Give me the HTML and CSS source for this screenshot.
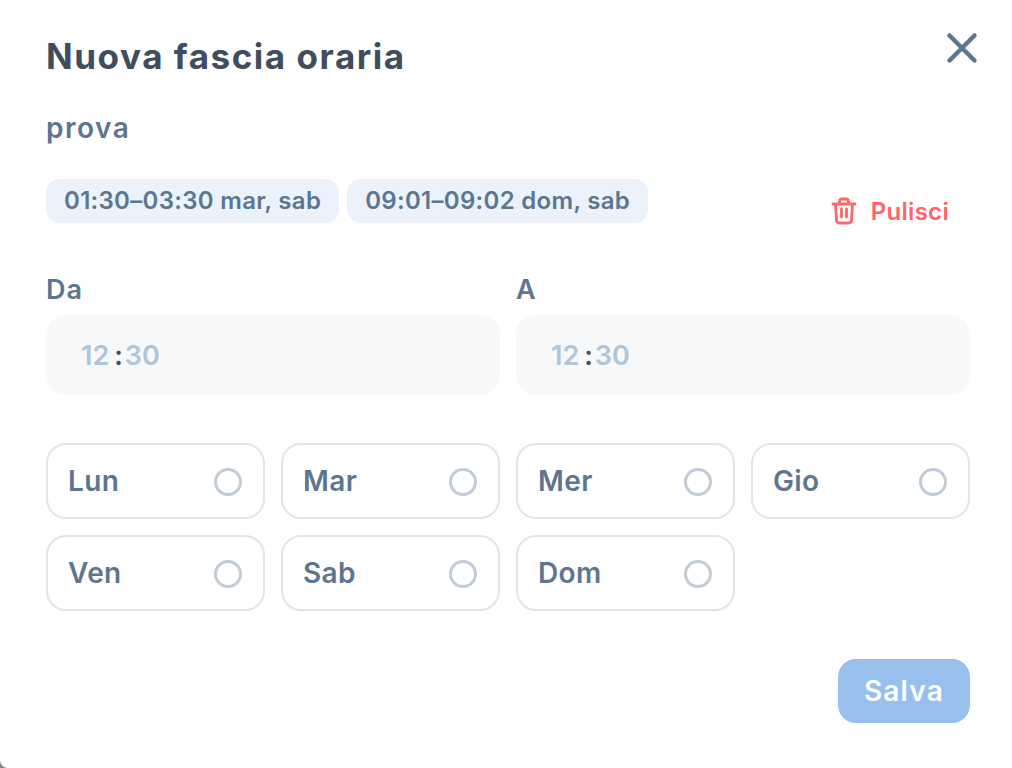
FILE: index.html
```html
<!DOCTYPE html>
<html lang="it">
<head>
<meta charset="utf-8">
<title>Nuova fascia oraria</title>
<link rel="stylesheet" href="styles.css">
</head>
<body>
<div class="dialog">
  <header class="head">
    <h1 class="title">Nuova fascia oraria</h1>
    <button class="close" aria-label="Chiudi">
      <svg width="32" height="32" viewBox="0 0 32 32" fill="none" stroke="#5c7690" stroke-width="4.500" stroke-linecap="round"><path d="M3.500 3.500L28.500 28.500M28.500 3.500L3.500 28.500"/></svg>
    </button>
  </header>
  <p class="name">prova</p>
  <div class="chips-row">
    <div class="chips">
      <span class="chip">01:30–03:30 mar, sab</span>
      <span class="chip">09:01–09:02 dom, sab</span>
    </div>
    <button class="clear">
      <svg width="26" height="28" viewBox="0 0 26 28" fill="none" stroke="#ff6468" stroke-width="2.800" stroke-linecap="round" stroke-linejoin="round"><path d="M2 7H24M8.500 7V4.500A2.500 2.500 0 0 1 11 2H15A2.500 2.500 0 0 1 17.500 4.500V7M4.500 7L5.500 23A3 3 0 0 0 8.500 26H17.500A3 3 0 0 0 20.500 23L21.500 7M10.500 12V20M15.500 12V20"/></svg>
      <span>Pulisci</span>
    </button>
  </div>
  <div class="times">
    <div class="field">
      <label class="label">Da</label>
      <div class="time"><span>12</span><b>:</b><span>30</span></div>
    </div>
    <div class="field">
      <label class="label">A</label>
      <div class="time"><span>12</span><b>:</b><span>30</span></div>
    </div>
  </div>
  <div class="days">
    <div class="day"><span>Lun</span><i class="radio"></i></div>
    <div class="day"><span>Mar</span><i class="radio"></i></div>
    <div class="day"><span>Mer</span><i class="radio"></i></div>
    <div class="day"><span>Gio</span><i class="radio"></i></div>
    <div class="day"><span>Ven</span><i class="radio"></i></div>
    <div class="day"><span>Sab</span><i class="radio"></i></div>
    <div class="day"><span>Dom</span><i class="radio"></i></div>
  </div>
  <footer class="foot"><button class="save">Salva</button></footer>
</div>
</body>
</html>
```
FILE: styles.css
```css
* { box-sizing: border-box; }
html, body { margin: 0; height: 100%; }
body {
  background: #7d8791;
  font-family: "Inter", "Liberation Sans", sans-serif;
  overflow: hidden;
}
button { font: inherit; border: 0; background: none; padding: 0; cursor: pointer; }
.dialog {
  width: 1012px;
  height: 768px;
  background: #fff;
  border-radius: 0 0 0 8px;
  padding: 0 42px 0 46px;
  display: flex;
  flex-direction: column;
}
.head { display: flex; justify-content: space-between; height: 110px; align-items: flex-start; margin-right: -7px; }
.title {
  margin: 35px 0 0;
  font-size: 35px;
  line-height: 42px;
  font-weight: 700;
  letter-spacing: 1.55px;
  color: #3e4e5e;
}
.close { margin-top: 32px; margin-right: -1px; width: 32px; height: 32px; display: block; }
.close svg { display: block; }
.name {
  margin: 0;
  font-size: 28px;
  line-height: 36px;
  font-weight: 600;
  letter-spacing: 1.5px;
  color: #5c7690;
  height: 69px;
}
.chips-row { display: flex; justify-content: space-between; align-items: flex-start; height: 91px; padding-right: 20px; }
.chips { display: flex; gap: 8px; }
.chip {
  height: 44px;
  border-radius: 14px;
  background: #ebf2fb;
  color: #5c7690;
  font-size: 24px;
  font-weight: 600;
  letter-spacing: 0.3px;
  line-height: 44px;
  padding: 0 18px;
  white-space: nowrap;
}
.clear {
  display: flex;
  align-items: center;
  gap: 14px;
  color: #ff6468;
  font-size: 24px;
  font-weight: 600;
  letter-spacing: 0.3px;
  margin-top: 18px;
  margin-right: 1px;
  height: 28px;
}
.clear svg { display: block; }
.times { display: grid; grid-template-columns: 1fr 1fr; gap: 16px; width: 924px; }
.label { display: block; font-size: 27px; line-height: 36px; height: 45px; padding-top: 2px; font-weight: 600; letter-spacing: 1px; color: #5c7690; }
.time {
  height: 80px;
  border-radius: 20px;
  background: #f7f8fa;
  display: flex;
  align-items: center;
  padding-left: 35px;
  font-size: 27px;
  font-weight: 600;
  color: #aec6da;
}
.time b { color: #3e4e5e; font-weight: 600; margin: 0 2px 0 5px; }
.days {
  display: grid;
  grid-template-columns: repeat(4, 219px);
  gap: 16px;
  margin-top: 48px;
}
.day {
  height: 76px;
  border: 2px solid #dfe5ee;
  border-radius: 20px;
  display: flex;
  align-items: center;
  justify-content: space-between;
  padding: 0 21px 0 20px;
  font-size: 28px;
  font-weight: 600;
  letter-spacing: 0.4px;
  color: #5c7690;
}
.radio { width: 28px; height: 28px; border: 3px solid #c2ccd6; border-radius: 50%; display: block; margin-top: 2px; }
.foot { display: flex; justify-content: flex-end; margin-top: 48px; width: 924px; }
.save {
  width: 132px;
  height: 64px;
  border-radius: 18px;
  background: #97c1ec;
  color: #fff;
  font-size: 28px;
  font-weight: 600;
  letter-spacing: 1.2px;
}
```
